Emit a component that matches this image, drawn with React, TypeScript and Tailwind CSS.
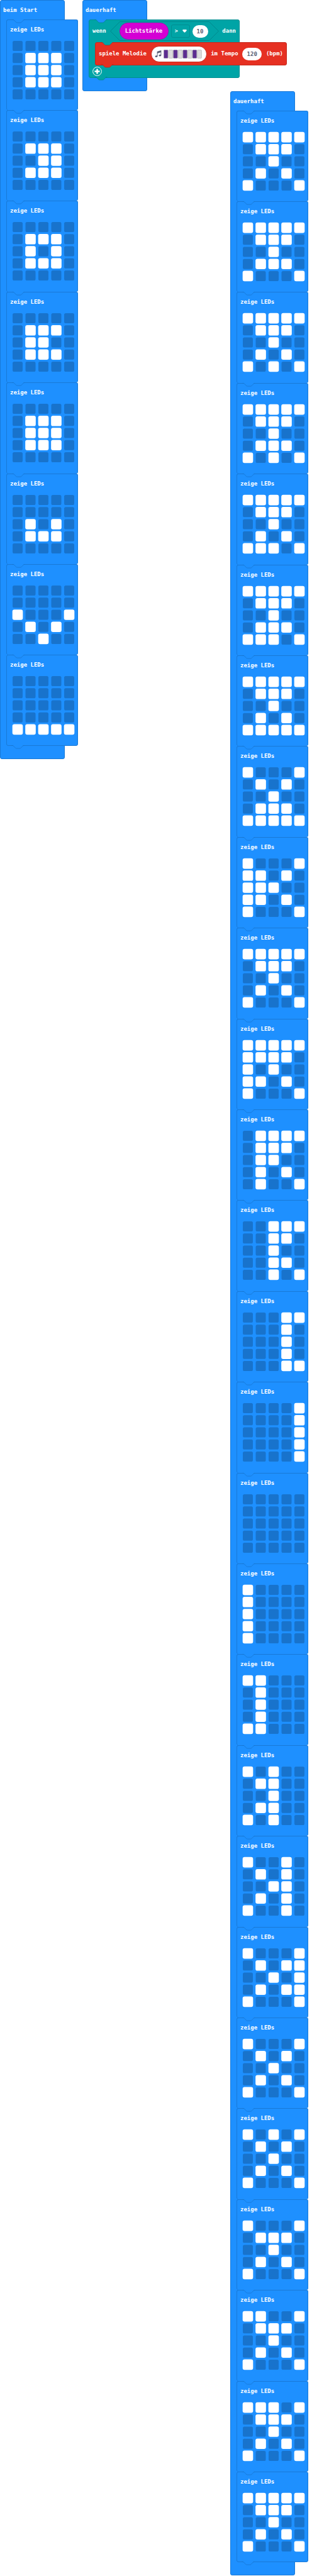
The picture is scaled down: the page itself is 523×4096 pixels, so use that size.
import type { ReactNode } from "react";

type Frame = string[];

const startFrames: Frame[] = [
  ["00000", "01110", "01110", "01110", "00000"],
  ["00000", "01110", "00110", "01110", "00000"],
  ["00000", "01110", "01010", "01110", "00000"],
  ["00000", "01110", "01100", "01110", "00000"],
  ["00000", "01110", "01110", "01110", "00000"],
  ["00000", "00000", "01010", "01110", "00000"],
  ["00000", "00000", "10001", "01010", "00100"],
  ["00000", "00000", "00000", "00000", "11111"],
];

const foreverFrames: Frame[] = [
  ["11111", "01110", "00100", "01010", "10001"],
  ["11111", "01110", "00100", "01110", "10001"],
  ["11111", "01110", "00100", "01010", "10101"],
  ["11111", "01110", "00100", "01110", "10101"],
  ["11111", "01110", "00100", "01010", "11101"],
  ["11111", "01110", "00100", "01110", "11101"],
  ["11111", "01110", "00100", "01010", "11111"],
  ["10001", "01010", "00100", "01110", "11111"],
  ["10001", "11010", "11100", "11010", "10001"],
  ["11111", "01110", "00100", "01010", "10001"],
  ["11111", "11110", "10100", "11010", "10001"],
  ["01111", "01110", "01100", "01010", "01001"],
  ["00111", "00110", "00100", "00110", "00101"],
  ["00011", "00010", "00010", "00010", "00011"],
  ["00001", "00001", "00001", "00001", "00001"],
  ["00000", "00000", "00000", "00000", "00000"],
  ["10000", "10000", "10000", "10000", "10000"],
  ["11000", "01000", "01000", "01000", "11000"],
  ["10100", "01100", "00100", "01100", "10100"],
  ["10010", "01010", "00110", "01010", "10010"],
  ["10001", "01011", "00101", "01011", "10001"],
  ["10001", "01010", "00100", "01010", "10001"],
  ["10101", "01010", "00100", "01010", "10001"],
  ["10001", "01110", "00100", "01010", "10001"],
  ["11001", "01110", "00100", "01010", "10001"],
  ["11101", "01110", "00100", "01010", "10001"],
  ["11111", "01110", "00100", "01010", "10001"],
];

/* Connector shape: dips below the edge it sits on. */
function Notch({ tone, place }: { tone: string; place: string }) {
  return (
    <svg
      aria-hidden="true"
      viewBox="0 0 33 10"
      className={`absolute left-2 z-10 h-[6px] w-[21px] overflow-visible ${place} ${tone}`}
    >
      <path d="M0 0 C3 0 4 1 5 2 L8.500 6 C10 7.600 11 8.500 13 8.500 H21 C23 8.500 24 7.600 25.500 6 L29 2 C30 1 31 0 33 0 Z" stroke="none" />
      <path d="M0 .7 C3 .7 4 1.200 5 2 L8.500 6 C10 7.600 11 8.500 13 8.500 H21 C23 8.500 24 7.600 25.500 6 L29 2 C30 1.200 31 .7 33 .7" fill="none" strokeWidth="1.200" />
    </svg>
  );
}

function LedMatrix({ frame }: { frame: Frame }) {
  return (
    <svg role="img" aria-label="LEDs" viewBox="0 0 153 145" className="ml-[9px] mt-[10px] h-[93px] w-[98px] overflow-visible">
      {frame.map((row, y) =>
        row.split("").map((led, x) =>
          led === "1" ? (
            <rect key={`${x}-${y}`} x={x * 32 - 0.5} y={y * 30 - 0.5} width="26" height="26" rx="5" fill="#fff" />
          ) : (
            <rect key={`${x}-${y}`} x={x * 32} y={y * 30} width="25" height="25" rx="4" fill="#1873cc" />
          ),
        ),
      )}
    </svg>
  );
}

function LedBlock({ frame }: { frame: Frame }) {
  return (
    <li className="relative h-36 rounded-[3px] border-x border-t border-[#1979d6] bg-[#1e90ff] pt-[7px] last:border-b nth-[5n]:h-[145px] nth-[5n+3]:h-[145px]">
      <Notch tone="fill-[#1e90ff] stroke-[#1873cc]" place="-top-px" />
      <p className="pl-[5px] leading-4">zeige LEDs</p>
      <LedMatrix frame={frame} />
    </li>
  );
}

function Hat({ title, children }: { title: string; children: ReactNode }) {
  return (
    <section className="w-[103px] shrink-0 rounded-[3px] border border-[#1979d6] bg-[#1e90ff] pb-5">
      <h2 className="px-1 py-[7px] leading-4">{title}</h2>
      <div className="ml-[9px]">{children}</div>
    </section>
  );
}

function LedStack({ frames }: { frames: Frame[] }) {
  return (
    <div className="relative w-[114px]">
      <ul>
        {frames.map((frame, i) => (
          <LedBlock key={i} frame={frame} />
        ))}
      </ul>
      <Notch tone="fill-[#1e90ff] stroke-[#1873cc]" place="top-full -mt-px" />
    </div>
  );
}

function Condition() {
  return (
    <div className="relative flex h-[31px] w-[173px] items-center gap-1 pl-[15px]">
      <svg aria-hidden="true" viewBox="0 0 173 31" className="absolute inset-0 h-full w-full">
        <path d="M15.500 .5 H157.500 L172.500 15.500 L157.500 30.500 H15.500 L.5 15.500 Z" fill="#00a4a6" stroke="#008387" strokeWidth=".8" />
      </svg>
      <span className="relative flex h-[27px] w-[78px] items-center justify-center rounded-full border border-[#b400b4] bg-[#d400d4]">
        Lichtstärke
      </span>
      <span className="relative flex h-[21px] w-[30px]">
        <select
          aria-label="Vergleich"
          defaultValue=">"
          className="h-full w-full appearance-none rounded-[3px] border border-[#008e91] bg-[#00a4a6] pl-[5px] font-bold text-white"
        >
          <option>&gt;</option>
          <option>&lt;</option>
          <option>=</option>
        </select>
        <svg aria-hidden="true" viewBox="0 0 14 10" className="pointer-events-none absolute right-[5px] top-2 h-[5px] w-[7px]">
          <path d="M3.500 0 H10.500 C13.500 0 14.500 2.500 12.500 4.600 L8.600 8.600 C7.600 9.600 6.400 9.600 5.400 8.600 L1.500 4.600 C-.5 2.500 .5 0 3.500 0 Z" fill="#fff" />
        </svg>
      </span>
      <input
        aria-label="Schwellwert"
        defaultValue="10"
        className="relative h-5 w-[25px] rounded-[10px] bg-white text-center font-bold text-[#575e75]"
      />
    </div>
  );
}

function MelodyButton() {
  return (
    <button
      type="button"
      aria-label="Melodie bearbeiten"
      className="flex h-[26px] w-[89px] items-center gap-[3px] rounded-full border border-[#c92a1e] bg-white pl-[5px]"
    >
      <svg aria-hidden="true" viewBox="0 0 17 18" className="h-[11px] w-[11px]">
        <path
          d="M5.500 3.200 L16.500 0 V12.800 C16.500 14.400 15 15.700 13 15.700 C11.300 15.700 10 14.900 10 13.700 C10 12.300 11.700 11.200 13.600 11.200 C14.200 11.200 14.700 11.300 15 11.400 V5.400 L7 7.700 V15.300 C7 16.900 5.500 18 3.500 18 C1.700 18 .4 17.200 .4 16 C.4 14.600 2.100 13.500 4 13.500 C4.600 13.500 5.100 13.600 5.500 13.700 Z"
          fill="#575e75"
        />
      </svg>
      <svg aria-hidden="true" viewBox="0 0 96 22" className="h-[14px] w-[61px]">
        {[0, 1, 2, 3, 4, 5, 6, 7].map((n) => (
          <rect
            key={n}
            x={n * 12 + 0.5}
            y=".5"
            width="10.500"
            height="21"
            rx="2"
            fill={n % 2 ? "#dcdcdc" : "#5c2d91"}
            stroke="#a9a9a9"
          />
        ))}
      </svg>
    </button>
  );
}

function MelodyBlock() {
  return (
    <div className="relative flex h-[37px] w-[305px] items-center justify-between rounded-[3px] border border-[#c4291d] bg-[#e63022] px-[5px]">
      <Notch tone="fill-[#00a4a6] stroke-[#b8261b]" place="-top-px" />
      <span>spiele Melodie</span>
      <MelodyButton />
      <span>im Tempo</span>
      <input
        aria-label="Tempo"
        defaultValue="120"
        className="h-5 w-[31px] rounded-[10px] bg-white text-center font-bold text-[#575e75]"
      />
      <span>(bpm)</span>
      <Notch tone="fill-[#e63022] stroke-[#b8261b]" place="top-full -mt-px" />
    </div>
  );
}

function IfBlock() {
  return (
    <div className="relative w-[240px] rounded-[3px] border border-[#008e91] bg-[#00a4a6]">
      <Notch tone="fill-[#1e90ff] stroke-[#008387]" place="-top-px" />
      <div className="flex h-[35px] items-center justify-between px-[5px]">
        <span>wenn</span>
        <Condition />
        <span>dann</span>
      </div>
      <div className="ml-[9px]">
        <MelodyBlock />
      </div>
      <div className="flex h-[19px] items-center pl-[5px]">
        <button type="button" aria-label="sonst hinzufügen" className="h-[15px] w-[15px]">
          <svg aria-hidden="true" viewBox="0 0 24 24" className="h-full w-full">
            <circle cx="12" cy="12" r="11" fill="none" stroke="#fff" strokeWidth="1.600" />
            <path d="M10 5.500 h4 v4.500 h4.500 v4 h-4.500 v4.500 h-4 v-4.500 h-4.500 v-4 h4.500 Z" fill="#fff" />
          </svg>
        </button>
      </div>
      <Notch tone="fill-[#00a4a6] stroke-[#008387]" place="top-full -mt-px" />
    </div>
  );
}

export default function App() {
  return (
    <main className="flex items-start bg-white font-['DejaVu_Sans_Mono',monospace] text-[9px] font-bold text-white">
      <Hat title="beim Start">
        <LedStack frames={startFrames} />
      </Hat>
      <div className="ml-7 mr-[132px]">
        <Hat title="dauerhaft">
          <IfBlock />
        </Hat>
      </div>
      <div className="mt-[145px]">
        <Hat title="dauerhaft">
          <LedStack frames={foreverFrames} />
        </Hat>
      </div>
    </main>
  );
}
